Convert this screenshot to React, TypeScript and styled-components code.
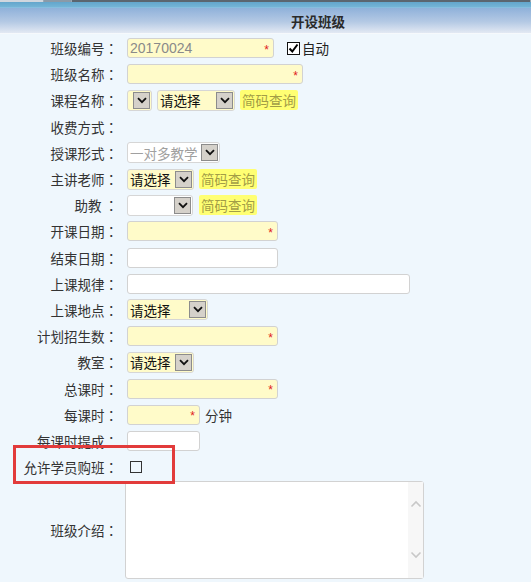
import React from "react";
import styled, { createGlobalStyle } from "styled-components";

const GlobalStyle = createGlobalStyle`
	html, body {
		margin: 0;
		padding: 0;
		background: #eff7fd;
	}
	body {
		font-family: "Liberation Sans", "Noto Sans CJK SC", sans-serif;
		font-size: 14px;
		color: #333;
	}
`;

export default function App() {
	return (
		<Page>
			<GlobalStyle />
			<TopStrip>
				<StripTab $color="#cfd6de" $width={43} />
				<StripTab $color="#8a9aa8" $width={27} />
				<StripTab $color="#5b6670" $width={0} />
			</TopStrip>
			<TopBar />
			<Header>
				<Title>开设班级</Title>
			</Header>
			<Form>
				<FormRow>
					<FieldLabel text="班级编号" />
					<Field>
						<TextBox $width={147} $yellow>
							<Value $muted>20170024</Value>
							<Star>*</Star>
						</TextBox>
						<CheckLabel>
							<CheckBox $checked>
								<svg width="11" height="11" viewBox="0 0 11 11">
									<path d="M1.5 5.5 L4.3 8.5 L9.5 1.5" fill="none" stroke="#000" strokeWidth="2" />
								</svg>
							</CheckBox>
							自动
						</CheckLabel>
					</Field>
				</FormRow>
				<FormRow>
					<FieldLabel text="班级名称" />
					<Field>
						<TextBox $width={176} $yellow>
							<Value />
							<Star>*</Star>
						</TextBox>
					</Field>
				</FormRow>
				<FormRow>
					<FieldLabel text="课程名称" />
					<Field $gap={5}>
						<Select width={25} yellow text="" />
						<Select width={78} yellow text="请选择" />
						<QueryButton>简码查询</QueryButton>
					</Field>
				</FormRow>
				<FormRow>
					<FieldLabel text="收费方式" />
					<Field />
				</FormRow>
				<FormRow>
					<FieldLabel text="授课形式" />
					<Field>
						<Select width={93} text="一对多教学" disabled />
					</Field>
				</FormRow>
				<FormRow>
					<FieldLabel text="主讲老师" />
					<Field $gap={5}>
						<Select width={67} yellow text="请选择" />
						<QueryButton>简码查询</QueryButton>
					</Field>
				</FormRow>
				<FormRow>
					<FieldLabel text="助教 " />
					<Field $gap={6}>
						<Select width={66} text="" />
						<QueryButton>简码查询</QueryButton>
					</Field>
				</FormRow>
				<FormRow>
					<FieldLabel text="开课日期" />
					<Field>
						<TextBox $width={151} $yellow>
							<Value />
							<Star>*</Star>
						</TextBox>
					</Field>
				</FormRow>
				<FormRow>
					<FieldLabel text="结束日期" />
					<Field>
						<TextBox $width={151}>
							<Value />
						</TextBox>
					</Field>
				</FormRow>
				<FormRow>
					<FieldLabel text="上课规律" />
					<Field>
						<TextBox $width={283}>
							<Value />
						</TextBox>
					</Field>
				</FormRow>
				<FormRow>
					<FieldLabel text="上课地点" />
					<Field>
						<Select width={81} yellow text="请选择" />
					</Field>
				</FormRow>
				<FormRow>
					<FieldLabel text="计划招生数" />
					<Field>
						<TextBox $width={151} $yellow>
							<Value />
							<Star>*</Star>
						</TextBox>
					</Field>
				</FormRow>
				<FormRow>
					<FieldLabel text="教室" />
					<Field>
						<Select width={67} yellow text="请选择" />
					</Field>
				</FormRow>
				<FormRow>
					<FieldLabel text="总课时" />
					<Field>
						<TextBox $width={151} $yellow>
							<Value />
							<Star>*</Star>
						</TextBox>
					</Field>
				</FormRow>
				<FormRow>
					<FieldLabel text="每课时" />
					<Field $gap={5}>
						<TextBox $width={73} $yellow>
							<Value />
							<Star>*</Star>
						</TextBox>
						<Unit>分钟</Unit>
					</Field>
				</FormRow>
				<FormRow>
					<FieldLabel text="每课时提成" />
					<Field>
						<TextBox $width={73}>
							<Value />
						</TextBox>
					</Field>
				</FormRow>
				<FormRow>
					<FieldLabel text="允许学员购班" />
					<Field>
						<CheckBox $indent={3} />
					</Field>
					<Highlight />
				</FormRow>
				<AreaRow>
					<FieldLabel text="班级介绍" />
					<TextArea>
						<AreaBody />
						<ScrollBar>
							<svg width="12" height="8" viewBox="0 0 12 8">
								<path d="M1.5 6.5 L6 2 L10.5 6.5" fill="none" stroke="#c8c8c8" strokeWidth="1.6" />
							</svg>
							<svg width="12" height="8" viewBox="0 0 12 8">
								<path d="M1.5 1.5 L6 6 L10.5 1.5" fill="none" stroke="#c8c8c8" strokeWidth="1.6" />
							</svg>
						</ScrollBar>
					</TextArea>
				</AreaRow>
			</Form>
		</Page>
	);
}

function FieldLabel({ text }: { text: string }) {
	return (
		<Label>
			{text}
			<Colon>：</Colon>
		</Label>
	);
}

function Select({ width, text, yellow, disabled }: { width: number; text: string; yellow?: boolean; disabled?: boolean }) {
	return (
		<SelectBox $width={width} $yellow={yellow}>
			<SelectText $disabled={disabled}>{text}</SelectText>
			<ArrowBox>
				<svg width="10" height="7" viewBox="0 0 10 7">
					<path d="M1 1.2 L5 5.2 L9 1.2" fill="none" stroke="#111" strokeWidth="1.8" />
				</svg>
			</ArrowBox>
		</SelectBox>
	);
}

const Page = styled.div`
	width: 531px;
	min-height: 582px;
	overflow: hidden;
`;
const TopStrip = styled.div`
	display: flex;
	height: 2px;
	background: #5b6670;
`;
const StripTab = styled.div<{ $color: string; $width: number }>`
	flex: ${(p) => (p.$width ? `0 0 ${p.$width}px` : "1")};
	background: ${(p) => p.$color};
	border-right: 1px solid #9aa8b4;
`;
const TopBar = styled.div`
	height: 5px;
	background: linear-gradient(#63a6cc, #74b4d6);
	border-bottom: 1px solid #86bede;
`;
const Header = styled.div`
	height: 25px;
	display: flex;
	align-items: center;
	justify-content: center;
	padding-left: 105px;
	background: linear-gradient(#8fb1da, #b4c9e4 55%, #e3e9f3);
	border-bottom: 1px solid #f6f9fc;
`;
const Title = styled.h1`
	margin: 0;
	font-size: 13.5px;
	font-weight: bold;
	color: #2a2a2a;
	font-family: "Noto Sans CJK SC", sans-serif;
`;
const Form = styled.div`
	display: flex;
	flex-direction: column;
	padding-top: 1px;
`;
const FormRow = styled.div`
	position: relative;
	display: grid;
	grid-template-columns: 118px 1fr;
	column-gap: 9px;
	align-items: center;
	height: 26.2px;
`;
const AreaRow = styled.div`
	display: grid;
	grid-template-columns: 118px 1fr;
	column-gap: 7px;
	align-items: center;
	margin-top: 1px;
`;
const Label = styled.label`
	text-align: right;
	white-space: nowrap;
	font-family: "Noto Sans CJK SC", sans-serif;
	font-size: 13.5px;
	color: #333;
`;
const Colon = styled.span`
	font-family: "Noto Sans CJK TC", sans-serif;
`;
const Field = styled.div<{ $gap?: number }>`
	display: flex;
	align-items: center;
	gap: ${(p) => p.$gap ?? 0}px;
	height: 20px;
`;
const TextBox = styled.div<{ $width: number; $yellow?: boolean }>`
	box-sizing: border-box;
	display: flex;
	align-items: center;
	width: ${(p) => p.$width}px;
	height: 20px;
	border: 1px solid #d2d2d2;
	border-radius: 3px;
	background: ${(p) => (p.$yellow ? "#fffbc9" : "#ffffff")};
	padding: 0 4px 0 2px;
`;
const Value = styled.span<{ $muted?: boolean }>`
	flex: 1;
	font-size: 14px;
	color: ${(p) => (p.$muted ? "#8a8a8a" : "#111")};
	font-family: "Liberation Sans", sans-serif;
`;
const Star = styled.span`
	color: #e02020;
	font-size: 12px;
	line-height: 1;
	padding-top: 3px;
`;
const CheckLabel = styled.span`
	display: inline-flex;
	align-items: center;
	gap: 2px;
	margin-left: 13px;
	font-family: "Noto Sans CJK SC", sans-serif;
	font-size: 13.5px;
	color: #222;
`;
const CheckBox = styled.span<{ $checked?: boolean; $indent?: number }>`
	box-sizing: border-box;
	display: inline-flex;
	align-items: center;
	justify-content: center;
	width: ${(p) => (p.$checked ? 13 : 12)}px;
	height: ${(p) => (p.$checked ? 13 : 12)}px;
	margin-left: ${(p) => p.$indent ?? 0}px;
	border: 1px solid ${(p) => (p.$checked ? "#111" : "#333")};
	background: ${(p) => (p.$checked ? "#fff" : "transparent")};
`;
const SelectBox = styled.div<{ $width: number; $yellow?: boolean }>`
	box-sizing: border-box;
	display: flex;
	align-items: center;
	width: ${(p) => p.$width}px;
	height: 21px;
	border: 1px solid #d6d6d6;
	border-radius: 3px;
	background: ${(p) => (p.$yellow ? "#fffbc9" : "#ffffff")};
	padding-right: 1px;
`;
const SelectText = styled.span<{ $disabled?: boolean }>`
	flex: 1;
	overflow: hidden;
	white-space: nowrap;
	padding-left: 2px;
	font-family: "Noto Sans CJK SC", sans-serif;
	font-size: 13.5px;
	color: ${(p) => (p.$disabled ? "#a0a0a0" : "#111")};
`;
const ArrowBox = styled.span`
	box-sizing: border-box;
	flex: 0 0 17px;
	height: 17px;
	display: flex;
	align-items: center;
	justify-content: center;
	background: #d5d1ca;
	border: 1px solid #8c8c8c;
`;
const QueryButton = styled.button`
	height: 20px;
	padding: 0 2px;
	border: none;
	border-radius: 2px;
	background: #ffff73;
	color: #a29d46;
	font-family: "Noto Sans CJK SC", sans-serif;
	font-size: 13.5px;
	line-height: 20px;
	cursor: pointer;
`;
const Unit = styled.span`
	font-family: "Noto Sans CJK SC", sans-serif;
	font-size: 13.5px;
	color: #333;
`;
const Highlight = styled.div`
	position: absolute;
	left: 13px;
	top: -9px;
	width: 162px;
	height: 39px;
	box-sizing: border-box;
	border: 3px solid #e23b3b;
	pointer-events: none;
`;
const TextArea = styled.div`
	box-sizing: border-box;
	display: flex;
	width: 299px;
	height: 98px;
	border: 1px solid #d2d2d2;
	border-radius: 3px;
	background: #fff;
`;
const AreaBody = styled.div`
	flex: 1;
`;
const ScrollBar = styled.div`
	flex: 0 0 15px;
	display: flex;
	flex-direction: column;
	justify-content: space-between;
	align-items: center;
	padding: 18px 0 19px;
	background: #f7f7f7;
`;
